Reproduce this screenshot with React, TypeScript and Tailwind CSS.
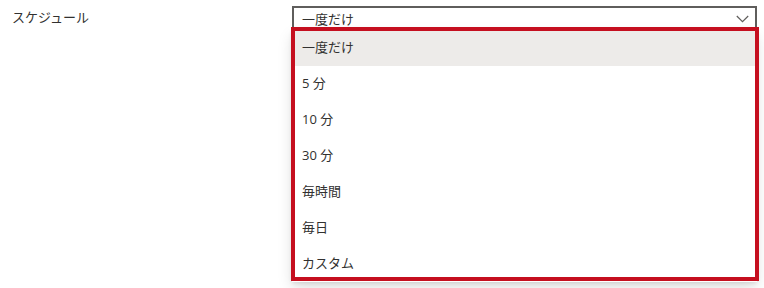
const options = ["一度だけ", "5 分", "10 分", "30 分", "毎時間", "毎日", "カスタム"];

const ScheduleField = () => {
  return (
    <div
      className="min-h-[288px] bg-white text-[#323130] text-[13px]"
      style={{ fontFamily: '"Open Sans", "Noto Sans CJK JP", sans-serif' }}
    >
      <div className="flex pl-3 pt-[6px]">
        <div className="w-[280px] h-[24px] flex items-center">スケジュール</div>

        <div className="relative w-[465px]">
          <div className="h-[24px] flex items-center justify-between border-2 border-b-0 border-[#5f5e5c] pl-2 pr-[6px]">
            <span className="leading-none">一度だけ</span>
            <svg width="13" height="8" viewBox="0 0 13 8" fill="none">
              <path d="M0.8 1l5.7 5.6 5.7-5.6" stroke="#605e5c" strokeWidth="1.2" />
            </svg>
          </div>

          {/* dropdown list */}
          <div className="absolute left-0 right-0 top-[24px] bg-white shadow-[0_6px_14px_rgba(0,0,0,0.13),0_1px_4px_rgba(0,0,0,0.11)]">
            {options.map((opt, i) => (
              <div
                key={opt}
                className={`h-9 flex items-center px-[10px] ${i === 0 ? "bg-[#edebe9]" : ""}`}
              >
                {opt}
              </div>
            ))}
          </div>

          {/* annotation frame */}
          <div className="absolute -left-px top-[21px] w-[468px] h-[254px] border-4 border-[#c50f1f] pointer-events-none" />
        </div>
      </div>
    </div>
  );
};

export default function App() {
  return <ScheduleField />;
}
